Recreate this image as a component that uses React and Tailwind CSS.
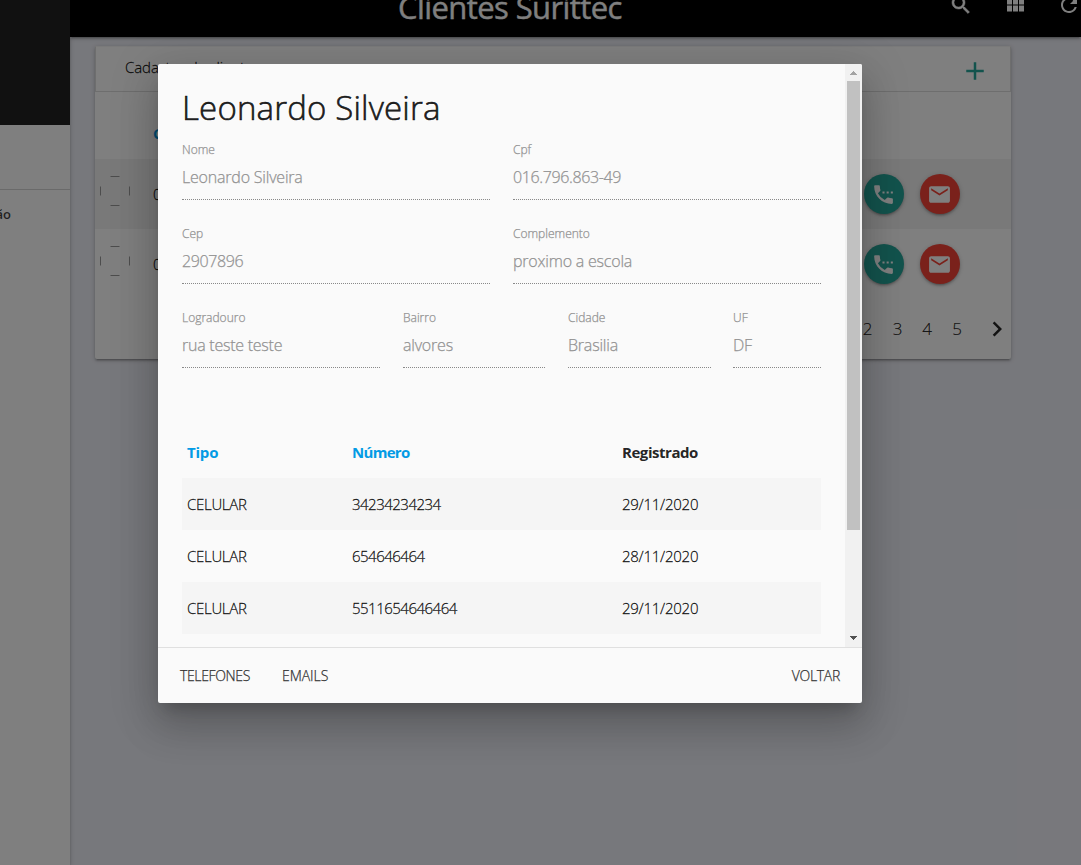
import React from "react";
import {
  MdRefresh,
  MdAdd,
  MdChevronRight,
  MdSettingsPhone,
} from "react-icons/md";

const phones = [
  { type: "CELULAR", number: "34234234234", date: "29/11/2020" },
  { type: "CELULAR", number: "654646464", date: "28/11/2020" },
  { type: "CELULAR", number: "5511654646464", date: "29/11/2020" },
];

function SearchIcon() {
  return (
    <svg width="24" height="24" viewBox="0 0 24 24" fill="currentColor" stroke="currentColor" strokeWidth="0.5">
      <path d="M15.5 14h-.79l-.28-.27C15.41 12.59 16 11.11 16 9.5 16 5.91 13.09 3 9.5 3S3 5.91 3 9.5 5.91 16 9.5 16c1.61 0 3.09-.59 4.23-1.57l.27.28v.79l5 4.99L20.49 19l-4.99-5zm-6 0C7.01 14 5 11.99 5 9.5S7.01 5 9.5 5 14 7.01 14 9.5 11.99 14 9.5 14z" />
    </svg>
  );
}

function ViewModuleIcon() {
  return (
    <svg width="25" height="25" viewBox="0 0 24 24" fill="currentColor">
      <path d="M4 11h5V5H4v6zm0 7h5v-6H4v6zm6 0h5v-6h-5v6zm6 0h5v-6h-5v6zm-6-7h5V5h-5v6zm6-6v6h5V5h-5z" />
    </svg>
  );
}

function EmailIcon() {
  return (
    <svg width="25" height="25" viewBox="0 0 24 24" fill="currentColor">
      <path d="M20 4H4c-1.1 0-1.99.9-1.99 2L2 18c0 1.1.9 2 2 2h16c1.1 0 2-.9 2-2V6c0-1.1-.9-2-2-2zm0 4l-8 5-8-5V6l8 5 8-5v2z" />
    </svg>
  );
}

function AvatarPlaceholder() {
  return (
    <svg width="30" height="30" viewBox="0 0 30 30" fill="none" stroke="#9a9a9a" strokeWidth="1">
      <path d="M10.5 .5h9M10.5 29.5h9M.5 10.5v9M29.5 10.5v9" />
    </svg>
  );
}

function Sidebar() {
  return (
    <aside className="relative z-10 flex w-[70px] shrink-0 flex-col bg-white shadow-[0_2px_2px_0_rgba(0,0,0,0.14),0_3px_1px_-2px_rgba(0,0,0,0.12),0_1px_5px_0_rgba(0,0,0,0.2)]">
      <div className="h-[125px] bg-[#222]" />
      <div className="h-[65px] border-b border-[#d4d4d4]" />
      <div className="flex h-[50px] w-[11px] items-center justify-end whitespace-nowrap text-[13px] font-semibold text-black/75">
        ão
      </div>
    </aside>
  );
}

function Navbar() {
  return (
    <nav className="relative z-10 -mt-[27px] flex h-16 shrink-0 items-center bg-black text-white shadow-[0_2px_2px_0_rgba(0,0,0,0.14),0_3px_1px_-2px_rgba(0,0,0,0.12),0_1px_5px_0_rgba(0,0,0,0.2)]">
      <span className="ml-[328px] mt-[3px] w-[551px] whitespace-nowrap text-[31px] leading-[64px] tracking-[-0.58px] [-webkit-text-stroke:0.4px]">
        Clientes Surittec
      </span>
      <div className="flex shrink-0 gap-[30px]">
        <SearchIcon />
        <span className="flex w-6 shrink-0"><ViewModuleIcon /></span>
        <MdRefresh className="size-6 shrink-0" />
      </div>
    </nav>
  );
}

function ClientRow({ striped, cpf }) {
  return (
    <div className={striped ? "flex h-[70px] items-center bg-[#f2f2f2]" : "flex h-[70px] items-center"}>
      <span className="mb-[6px] ml-[5px]"><AvatarPlaceholder /></span>
      <span className="ml-[23px] w-[711px] text-[15px] font-light [-webkit-text-stroke:0.3px]">{cpf}</span>
      <span className="flex size-10 items-center justify-center rounded-full bg-[#26a69a] text-white shadow-[0_2px_2px_0_rgba(0,0,0,0.14),0_3px_1px_-2px_rgba(0,0,0,0.12),0_1px_5px_0_rgba(0,0,0,0.2)]">
        <MdSettingsPhone className="mr-px size-[25px]" />
      </span>
      <span className="ml-4 flex size-10 items-center justify-center rounded-full bg-[#f44336] text-white shadow-[0_2px_2px_0_rgba(0,0,0,0.14),0_3px_1px_-2px_rgba(0,0,0,0.12),0_1px_5px_0_rgba(0,0,0,0.2)]">
        <span className="mr-px"><EmailIcon /></span>
      </span>
    </div>
  );
}

function ClientsCard() {
  return (
    <section className="ml-[25px] mt-[9px] h-[313px] w-[916px] rounded-[2px] bg-white text-black/85 shadow-[0_2px_2px_0_rgba(0,0,0,0.14),0_3px_1px_-2px_rgba(0,0,0,0.12),0_1px_5px_0_rgba(0,0,0,0.2)]">
      <div className="flex h-[46px] items-center justify-between border border-[#dcdcdc] border-t-[#f4f4f4] pl-[29px] pr-5">
        <span className="mb-[3px] text-[15px] font-light tracking-[-0.1px] [-webkit-text-stroke:0.3px]">Cadastro de clientes</span>
        <MdAdd className="mt-1 size-[30px] text-[#26a69a]" />
      </div>
      <div className="flex h-[67px] items-center pb-px pl-[58px] pt-[16px] text-[15px] font-bold text-[#039be5]">
        Cpf
      </div>
      <ClientRow striped cpf="016.796.863-49" />
      <ClientRow cpf="016.796.863-50" />
      <div className="flex h-[60px] items-center justify-end text-[17px] font-light [-webkit-text-stroke:0.2px]">
        <span className="w-[30px] pl-px text-center">2</span>
        <span className="w-[30px] pl-px text-center">3</span>
        <span className="w-[30px] text-center">4</span>
        <span className="w-[30px] text-center">5</span>
        <MdChevronRight className="-mr-px ml-[10px] size-[30px]" />
      </div>
    </section>
  );
}

function Field({ label, value, width, tracking = "tracking-[-0.2px]" }) {
  return (
    <div className={"flex h-[84px] shrink-0 flex-col text-[#929292] [-webkit-text-stroke:0.25px] " + width}>
      <span className="h-[18px] text-[12px] font-light leading-[18px] tracking-normal">{label}</span>
      <div className="flex h-[41px] items-center whitespace-nowrap border-b border-dotted border-black/45 pb-[4px]">
        <span className={"text-[16px] font-light leading-6 " + tracking}>{value}</span>
      </div>
    </div>
  );
}

function Scrollbar() {
  return (
    <div className="flex w-[17px] shrink-0 flex-col items-center bg-[#f1f1f1]">
      <svg width="17" height="17" viewBox="0 0 17 17" fill="#a3a3a3" shapeRendering="crispEdges">
        <path d="M5 11h7L8.5 7z" />
      </svg>
      <div className="h-[449px] w-[13px] bg-[#c1c1c1]" />
      <svg className="mt-auto" width="17" height="17" viewBox="0 0 17 17" fill="#505050" shapeRendering="crispEdges">
        <path d="M5 6h7L8.5 10z" />
      </svg>
    </div>
  );
}

function ClientModal() {
  return (
    <div className="ml-[158px] mt-16 flex h-[639px] w-[704px] flex-col overflow-hidden rounded-[2px] bg-[#fafafa] text-black/87 shadow-[0_24px_38px_3px_rgba(0,0,0,0.14),0_9px_46px_8px_rgba(0,0,0,0.12),0_11px_15px_-7px_rgba(0,0,0,0.2)]">
      <div className="flex h-[583px]">
        <div className="flex w-[687px] flex-col px-6">
          <h4 className="mt-[21px] h-[56px] whitespace-nowrap text-[33px] font-light leading-[46px] tracking-[0.17px] [-webkit-text-stroke:0.6px]">
            Leonardo Silveira
          </h4>
          <div className="flex gap-[23px]">
            <Field width="w-[308px]" label="Nome" value="Leonardo Silveira" />
            <Field width="w-[308px]" label="Cpf" value="016.796.863-49" tracking="tracking-[-0.37px]" />
          </div>
          <div className="flex gap-[23px]">
            <Field width="w-[308px]" label="Cep" value="2907896" tracking="tracking-[-0.37px]" />
            <Field width="w-[308px]" label="Complemento" value="proximo a escola" />
          </div>
          <div className="grid grid-cols-[221px_165px_165px_88px]">
            <Field width="w-[198px]" label="Logradouro" value="rua teste teste" tracking="tracking-[-0.25px]" />
            <Field width="w-[142px]" label="Bairro" value="alvores" />
            <Field width="w-[143px]" label="Cidade" value="Brasilia" />
            <Field width="w-[88px]" label="UF" value="DF" />
          </div>
          <div className="mt-[33px] grid h-[52px] grid-cols-[165px_270px_1fr] items-center pl-[5px] text-[15px] font-bold tracking-[-0.45px]">
            <span className="tracking-[-0.2px] text-[#039be5]">Tipo</span>
            <span className="tracking-[-0.7px] text-[#039be5]">Número</span>
            <span>Registrado</span>
          </div>
          {phones.map((p, i) => (
            <div
              key={p.number}
              className={
                "grid h-[52px] grid-cols-[165px_270px_1fr] items-center pl-[5px] text-[15px] font-light tracking-[-0.5px] [-webkit-text-stroke:0.3px] " +
                (i % 2 === 0 ? "bg-[#f5f5f5]" : "")
              }
            >
              <span className="tracking-[-0.3px]">{p.type}</span>
              <span>{p.number}</span>
              <span className="tracking-[-0.25px]">{p.date}</span>
            </div>
          ))}
        </div>
        <Scrollbar />
      </div>
      <footer className="flex h-14 items-center border-t border-[#e0e0e0] px-[22px] text-[14px] font-light tracking-[-0.3px] text-[#343434] [-webkit-text-stroke:0.25px]">
        <span className="w-[102px] tracking-[-0.35px]">TELEFONES</span>
        <span className="tracking-[-0.05px]">EMAILS</span>
        <span className="ml-auto">VOLTAR</span>
      </footer>
    </div>
  );
}

export default function App() {
  return (
    <div className="relative flex h-[865px] w-[1081px] overflow-hidden bg-[#eff0f8] font-['Open_Sans','Noto_Sans',sans-serif]">
      <Sidebar />
      <main className="flex min-w-0 flex-1 flex-col overflow-hidden">
        <Navbar />
        <ClientsCard />
      </main>
      <div className="absolute inset-0 z-20 flex items-start bg-black/50">
        <ClientModal />
      </div>
    </div>
  );
}
